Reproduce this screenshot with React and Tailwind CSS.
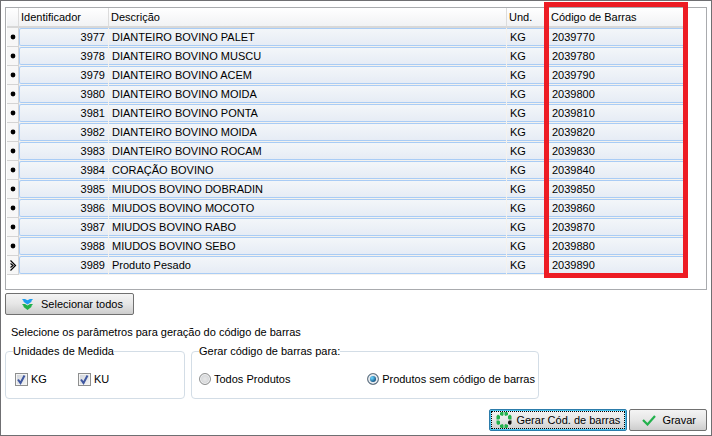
import { useState } from "react";

const PRODUTOS = [
  { id: 3977, descricao: "DIANTEIRO BOVINO PALET", und: "KG", codigo: "2039770" },
  { id: 3978, descricao: "DIANTEIRO BOVINO MUSCU", und: "KG", codigo: "2039780" },
  { id: 3979, descricao: "DIANTEIRO BOVINO ACEM", und: "KG", codigo: "2039790" },
  { id: 3980, descricao: "DIANTEIRO BOVINO MOIDA", und: "KG", codigo: "2039800" },
  { id: 3981, descricao: "DIANTEIRO BOVINO PONTA", und: "KG", codigo: "2039810" },
  { id: 3982, descricao: "DIANTEIRO BOVINO MOIDA", und: "KG", codigo: "2039820" },
  { id: 3983, descricao: "DIANTEIRO BOVINO ROCAM", und: "KG", codigo: "2039830" },
  { id: 3984, descricao: "CORAÇÃO BOVINO", und: "KG", codigo: "2039840" },
  { id: 3985, descricao: "MIUDOS BOVINO DOBRADIN", und: "KG", codigo: "2039850" },
  { id: 3986, descricao: "MIUDOS BOVINO MOCOTO", und: "KG", codigo: "2039860" },
  { id: 3987, descricao: "MIUDOS BOVINO RABO", und: "KG", codigo: "2039870" },
  { id: 3988, descricao: "MIUDOS BOVINO SEBO", und: "KG", codigo: "2039880" },
  { id: 3989, descricao: "Produto Pesado", und: "KG", codigo: "2039890" },
];

const HEAD = "h-5 border-b-2 border-r border-b-[#d8d8d8] border-r-[#dcdcdc] bg-linear-to-b from-white to-[#f1f2f4] pl-0.5 text-left font-normal";
const CELL = "h-[18px] border-y border-[#a9ccf5] bg-linear-to-b from-[#f3f6f9] to-[#e6ecf5] leading-4";
const BUTTON = "flex items-center rounded-xs border bg-linear-to-b from-[#f4f4f4] via-[#e6e6e6] to-[#cdcdcd]";

function IconeSelecionar() {
  return (
    <svg width="11" height="11" viewBox="0 0 11 11" aria-hidden="true">
      <path d="M0 0h3l2.500 1.200L8 0h3L9 2.500h1L5.500 5.500 1 2.500h1z" fill="#1c9df0" />
      <path d="M0 5h3l2.500 1.500L8 5h3L9 7.500h1L5.500 11 1 7.500h1z" fill="#22b14c" />
    </svg>
  );
}

function IconeGerar() {
  return (
    <svg width="16" height="16" viewBox="0 0 16 16" aria-hidden="true">
      <g fill="#22b14c">
        <path d="M4 1l1-1h2.500v3l-1 1L4 3zM8.500 0H11l1 1v2L9.500 4l-1-1z" />
        <path d="M12 4l2-1.500 1.500 1.500v3.500H13l-1-1zM4 4L2 2.500.5 4v3.500H3l1-1z" />
        <path d="M.5 8.500H3l1 1V12l-2 1-1.500-1.500zM4 13l2.500-1 1 1v3H5l-1-1zM8.500 13l1-1 2.500 1v2l-1 1H8.500z" />
      </g>
      <path d="M12 9.500l1-1h2.500v3L14 13l-2-1.500z" fill="#111" />
    </svg>
  );
}

function IconeGravar() {
  return (
    <svg width="14" height="11" viewBox="0 0 14 11" aria-hidden="true">
      <path d="M1 5l4.500 4.500L13 1" fill="none" stroke="#22b14c" strokeWidth="2.200" />
    </svg>
  );
}

function Marcador({ atual }) {
  return (
    <svg className="mx-auto block" width="8" height="11" viewBox="0 0 8 11" aria-hidden="true">
      {atual ? (
        <path d="M1.500 .5l5 5-5 5M1.500 3.500l2.500 2-2.500 2" fill="none" stroke="#000" strokeWidth="1.200" />
      ) : (
        <circle cx="4" cy="5" r="2.400" fill="#000" />
      )}
    </svg>
  );
}

function Caixa({ label, checked, onChange }) {
  return (
    <label className="flex items-center gap-[3px]">
      <span className="relative block size-[13px]">
        <input
          type="checkbox"
          checked={checked}
          onChange={onChange}
          className="peer block size-[13px] appearance-none border border-[#8e8f8f] bg-linear-to-br from-[#cfd3d9] to-[#f6f6f6] shadow-[inset_0_0_0_1px_#f4f4f4]"
        />
        <svg
          className="pointer-events-none absolute inset-0 hidden peer-checked:block"
          width="13"
          height="13"
          viewBox="0 0 13 13"
          aria-hidden="true"
        >
          <path d="M3 6.500l2.500 3.500L9.500 2.500" fill="none" stroke="#3f57a0" strokeWidth="2" />
        </svg>
      </span>
      {label}
    </label>
  );
}

function Opcao({ label, value, atual, onChange }) {
  return (
    <label className="flex items-center gap-[3px]">
      <input
        type="radio"
        name="gerarPara"
        value={value}
        checked={atual === value}
        onChange={() => onChange(value)}
        className="size-3 appearance-none rounded-full border border-[#8e8f8f] bg-radial from-[#e8e8e8] to-[#c9ccd0] shadow-[inset_0_0_0_1px_#f4f4f4] checked:border-[#6b7580] checked:bg-radial-[at_40%_40%] checked:from-[#5cc4f0] checked:from-10% checked:via-[#125080] checked:via-50% checked:to-[#0b2c4b] checked:shadow-[inset_0_0_0_2px_#e6eaee]"
      />
      {label}
    </label>
  );
}

function App() {
  const [unidades, setUnidades] = useState({ KG: true, KU: true });
  const [gerarPara, setGerarPara] = useState("sem");

  const alternar = (und) => {
    setUnidades((prev) => ({ ...prev, [und]: !prev[und] }));
  };

  return (
    <div className="flex min-h-screen flex-col border border-[#6f6f72] bg-white px-1 pt-1.5 pb-1 font-['Liberation_Sans',Arial,sans-serif] text-[11px] leading-[14px] text-black">
      <div className="relative border border-[#a9abae] pr-5 pb-3.5 pl-px">
        <table className="w-full table-fixed border-separate border-spacing-0">
          <colgroup>
            <col className="w-3" />
            <col className="w-[90px]" />
            <col />
            <col className="w-[42px]" />
            <col className="w-[137px]" />
          </colgroup>
          <thead>
            <tr>
              <th className={HEAD} aria-label="Marcador" />
              <th className={HEAD}>Identificador</th>
              <th className={HEAD}>Descrição</th>
              <th className={HEAD}>Und.</th>
              <th className={HEAD}>Código de Barras</th>
            </tr>
          </thead>
          <tbody>
            {PRODUTOS.map((p) => (
              <tr key={p.id}>
                <td className="border-r border-b border-[#d4d4d4] bg-[#f7f7f7] p-0">
                  <Marcador atual={p.id === 3989} />
                </td>
                <td className="border-r border-b border-[#f4f2ee] p-0">
                  <div className={`${CELL} rounded-l-xs border-l pr-[3px] text-right`}>{p.id}</div>
                </td>
                <td className="border-r border-b border-[#f4f2ee] p-0">
                  <div className={`${CELL} pl-[3px]`}>{p.descricao}</div>
                </td>
                <td className="border-r border-b border-[#f4f2ee] p-0">
                  <div className={`${CELL} pl-[3px]`}>{p.und}</div>
                </td>
                <td className="border-b border-[#f4f2ee] p-0">
                  <div className={`${CELL} rounded-r-xs border-r pl-[3px]`}>{p.codigo}</div>
                </td>
              </tr>
            ))}
          </tbody>
        </table>
        {/* destaque da coluna de códigos */}
        <div className="pointer-events-none absolute -top-1.5 right-[18px] bottom-[11px] w-36 border-5 border-[#ed1c24]" />
      </div>

      <div className="mt-[3px] flex">
        <button type="button" className={`${BUTTON} h-[22px] gap-2 border-[#707070] pr-2.5 pl-4`}>
          <IconeSelecionar />
          Selecionar todos
        </button>
      </div>

      <p className="mt-2.5 pl-1.5">Selecione os parâmetros para geração do código de barras</p>

      <div className="mt-[5px] flex gap-1.5">
        <fieldset className="h-[55px] w-[180px] rounded-sm border border-[#d3dde6] pl-[9px]">
          <legend className="-ml-0.5">Unidades de Medida</legend>
          <div className="mt-3.5 flex gap-[31px]">
            <Caixa label="KG" checked={unidades.KG} onChange={() => alternar("KG")} />
            <Caixa label="KU" checked={unidades.KU} onChange={() => alternar("KU")} />
          </div>
        </fieldset>
        <fieldset className="h-[55px] w-[348px] rounded-sm border border-[#d3dde6] pr-[3px] pl-[7px]">
          <legend>Gerar código de barras para:</legend>
          <div className="mt-3.5 flex justify-between">
            <Opcao label="Todos Produtos" value="todos" atual={gerarPara} onChange={setGerarPara} />
            <Opcao label="Produtos sem código de barras" value="sem" atual={gerarPara} onChange={setGerarPara} />
          </div>
        </fieldset>
      </div>

      <div className="mt-auto flex justify-end gap-0.5">
        <button
          type="button"
          className={`${BUTTON} relative h-[22px] gap-1 border-[#2c7cab] px-1.5 shadow-[inset_0_0_0_1px_#48c6f0]`}
        >
          <IconeGerar />
          Gerar Cód. de barras
          <span className="pointer-events-none absolute inset-px border border-dotted border-black" />
        </button>
        <button type="button" className={`${BUTTON} h-[22px] gap-1.5 border-[#707070] pr-2.5 pl-3`}>
          <IconeGravar />
          Gravar
        </button>
      </div>
    </div>
  );
}

export default App;
